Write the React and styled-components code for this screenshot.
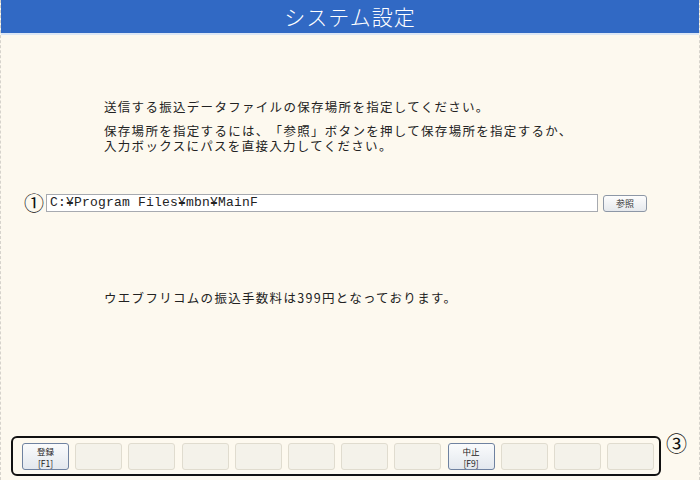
import React from 'react'
import styled, { createGlobalStyle } from 'styled-components'

const Global = createGlobalStyle`
  html, body { margin: 0; padding: 0; background: #fdf9ef; }
  * { box-sizing: border-box; }
`;

const Frame = styled.div`
  width: 700px;
  height: 480px;
  display: flex;
  flex-direction: column;
  background: #fdf9ef;
  border-left: 1px dashed #d6d3cc;
  border-right: 1px dashed #d6d3cc;
  font-family: "Noto Sans CJK JP", "Noto Sans", sans-serif;
  color: #222;
  text-spacing-trim: space-all;
`;

const Header = styled.div`
  height: 35px;
  background: #3169c4;
  border-bottom: 2px solid #dce7f5;
  color: #fff;
  display: flex;
  align-items: center;
  justify-content: center;
  font-size: 21px;
  font-weight: 300;
  letter-spacing: 1px;
  padding-bottom: 2px;
`;

const Message = styled.p`
  margin: ${({ $top }) => $top}px 0 0 103px;
  font-size: 12.5px;
  line-height: 15px;
  letter-spacing: 1.3px;
`;

const PathRow = styled.div`
  display: flex;
  align-items: center;
  margin: 41px 0 0 23px;
  height: 18px;
`;

const Mark = styled.span`
  font-size: 20px;
  line-height: 18px;
  width: 22px;
  color: #111;
`;

const PathInput = styled.div`
  width: 552px;
  height: 18px;
  border: 1px solid #a7aab0;
  background: #fff;
  font-family: "Liberation Mono", monospace;
  font-size: 13px;
  line-height: 16px;
  letter-spacing: 0.2px;
  padding-left: 3px;
  color: #222;
`;

const BrowseButton = styled.button`
  margin-left: 5px;
  width: 44px;
  height: 17px;
  border: 1px solid #8d97a6;
  border-radius: 3px;
  background: linear-gradient(#fdfdfd, #e6e9ed);
  font-family: "Noto Sans CJK JP", sans-serif;
  font-size: 9px;
  line-height: 13px;
  color: #333;
  padding: 0;
`;

const Footer = styled.div`
  margin-top: auto;
  margin-bottom: 4px;
  display: flex;
  align-items: flex-start;
  padding-left: 10px;
`;

const Toolbar = styled.div`
  width: 650px;
  height: 40px;
  border: 2px solid #111;
  border-radius: 6px;
  display: flex;
  gap: 6.2px;
  padding: 5px 0 0 9px;
`;

const FKey = styled.div`
  width: 47px;
  height: 27px;
  border-radius: 3px;
  border: 1px solid ${({ $on }) => ($on ? '#6f82a0' : '#e0dccf')};
  background: ${({ $on }) => ($on ? 'linear-gradient(#fafbfc, #e3e8ee)' : '#f4f2ea')};
  display: flex;
  flex-direction: column;
  align-items: center;
  justify-content: center;
  font-size: 8.5px;
  line-height: 12px;
  color: #222;
`;

const Circled = styled.span`
  font-size: 21px;
  line-height: 20px;
  margin: -4px 0 0 5px;
  color: #111;
`;

const keys = [
  ['登録', '[F1]'], null, null, null, null, null, null, null,
  ['中止', '[F9]'], null, null, null,
];

export default function App() {
  return (
    <>
      <Global />
      <Frame>
        <Header>システム設定</Header>
        <Message $top={64}>送信する振込データファイルの保存場所を指定してください。</Message>
        <Message $top={9}>
          保存場所を指定するには、「参照」ボタンを押して保存場所を指定するか、<br />
          入力ボックスにパスを直接入力してください。
        </Message>
        <PathRow>
          <Mark>①</Mark>
          <PathInput>C:¥Program Files¥mbn¥MainF</PathInput>
          <BrowseButton>参照</BrowseButton>
        </PathRow>
        <Message $top={78}>ウエブフリコムの振込手数料は399円となっております。</Message>
        <Footer>
          <Toolbar>
            {keys.map((k, i) => (
              <FKey key={i} $on={!!k}>
                {k && <span>{k[0]}</span>}
                {k && <span>{k[1]}</span>}
              </FKey>
            ))}
          </Toolbar>
          <Circled>③</Circled>
        </Footer>
      </Frame>
    </>
  )
}
